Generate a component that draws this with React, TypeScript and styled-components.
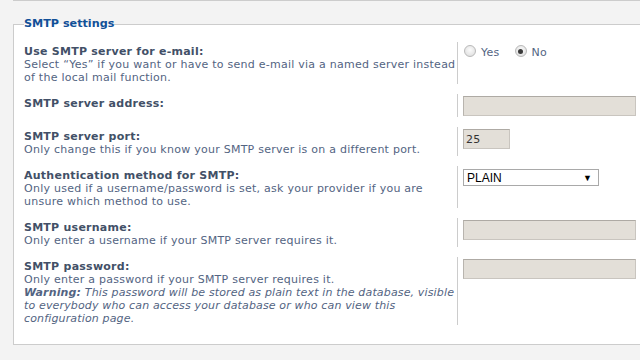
import React from 'react';
import styled, { createGlobalStyle } from 'styled-components';

const GlobalStyle = createGlobalStyle`
  html, body {
    margin: 0;
    padding: 0;
    background: #f3f3f3;
    overflow: hidden;
  }
  body {
    font-family: "DejaVu Sans", Verdana, sans-serif;
    font-size: 11px;
    letter-spacing: 0.25px;
    color: #536482;
  }
`;

const Page = styled.div`
  width: 700px;
  padding-left: 13px;
`;

const PrevEdge = styled.div`
  height: 0;
  border-bottom: 1px solid #cccccc;
`;

const Fieldset = styled.fieldset`
  margin: 16px 0 0;
  padding: 11px 10px 19px;
  border: 1px solid #cccccc;
  border-right: none;
  background: #ffffff;
  min-inline-size: 0;

  legend {
    padding: 0;
    font-size: 11.2px;
    letter-spacing: 0;
    line-height: 14px;
    font-weight: bold;
    color: #115098;
  }
`;

const Rows = styled.div`
  display: flex;
  flex-direction: column;
  gap: 10px;
`;

const Row = styled.dl`
  display: grid;
  grid-template-columns: 434px 1fr;
  margin: 0;
`;

const Term = styled.dt`
  padding-top: 3px;
  border-right: 1px solid #cccccc;
  line-height: 13px;
  white-space: nowrap;
  overflow: hidden;
`;

const Label = styled.label`
  display: block;
  font-weight: bold;
  color: #425067;
`;

const Explain = styled.span`
  display: block;
  color: #536482;

  em {
    font-style: italic;
    letter-spacing: 0.15px;
  }
`;

const Value = styled.dd`
  margin: 0;
  padding: 2px 0 1px 5px;
  display: flex;
  align-items: flex-start;
`;

const TextInput = styled.div<{ $w: number }>`
  box-sizing: border-box;
  width: ${(p) => p.$w}px;
  height: 20px;
  background: #e3dfd8;
  border: 1px solid #c9c5bf;
  border-top-color: #aeaaa4;
  border-left-color: #b8b4ae;
  padding: 3px 2px 0;
  font-size: 11px;
  line-height: 13px;
  color: #333333;
`;

const Radios = styled.div`
  display: flex;
  align-items: center;
  color: #536482;
  line-height: 13px;
  padding-top: 1px;
`;

const RadioLabel = styled.label`
  display: flex;
  align-items: center;
  margin-right: 14px;
`;

const Circle = styled.span<{ $checked?: boolean }>`
  box-sizing: border-box;
  width: 12px;
  height: 12px;
  border-radius: 50%;
  border: 1px solid #b9b9b9;
  background: radial-gradient(circle at 50% 40%, #fbfbfb 0%, #e4e4e4 70%, #d6d6d6 100%);
  margin: 0 5px 3px 1px;
  display: flex;
  align-items: center;
  justify-content: center;

  &::after {
    content: '';
    display: ${(p) => (p.$checked ? 'block' : 'none')};
    width: 5px;
    height: 5px;
    border-radius: 50%;
    background: #3a3a3a;
  }
`;

const Select = styled.div`
  box-sizing: border-box;
  width: 136px;
  height: 17px;
  margin-top: 1px;
  background: #ffffff;
  border: 1px solid #a9a9a9;
  display: flex;
  align-items: center;
  justify-content: space-between;
  padding: 0 6px 0 3px;
  font-family: "Liberation Sans", Arial, sans-serif;
  font-size: 12px;
  letter-spacing: 0;
  color: #000000;

  span:last-child {
    font-size: 9px;
  }
`;

export default function App() {
  return (
    <Page>
      <GlobalStyle />
      <PrevEdge />
      <Fieldset>
        <legend>SMTP settings</legend>
        <Rows>
          <Row>
            <Term>
              <Label>Use SMTP server for e-mail:</Label>
              <Explain>
                Select “Yes” if you want or have to send e-mail via a named server instead
                <br />
                of the local mail function.
              </Explain>
            </Term>
            <Value>
              <Radios>
                <RadioLabel>
                  <Circle />
                  Yes
                </RadioLabel>
                <RadioLabel>
                  <Circle $checked />
                  No
                </RadioLabel>
              </Radios>
            </Value>
          </Row>
          <Row>
            <Term>
              <Label>SMTP server address:</Label>
            </Term>
            <Value>
              <TextInput $w={173} />
            </Value>
          </Row>
          <Row>
            <Term>
              <Label>SMTP server port:</Label>
              <Explain>Only change this if you know your SMTP server is on a different port.</Explain>
            </Term>
            <Value>
              <TextInput $w={47}>25</TextInput>
            </Value>
          </Row>
          <Row>
            <Term>
              <Label>Authentication method for SMTP:</Label>
              <Explain>
                Only used if a username/password is set, ask your provider if you are
                <br />
                unsure which method to use.
              </Explain>
            </Term>
            <Value>
              <Select>
                <span>PLAIN</span>
                <span>▼</span>
              </Select>
            </Value>
          </Row>
          <Row>
            <Term>
              <Label>SMTP username:</Label>
              <Explain>Only enter a username if your SMTP server requires it.</Explain>
            </Term>
            <Value>
              <TextInput $w={173} />
            </Value>
          </Row>
          <Row>
            <Term>
              <Label>SMTP password:</Label>
              <Explain>
                Only enter a password if your SMTP server requires it.
                <br />
                <em>
                  <b>Warning:</b> This password will be stored as plain text in the database, visible
                  <br />
                  to everybody who can access your database or who can view this
                  <br />
                  configuration page.
                </em>
              </Explain>
            </Term>
            <Value>
              <TextInput $w={173} />
            </Value>
          </Row>
        </Rows>
      </Fieldset>
    </Page>
  );
}
